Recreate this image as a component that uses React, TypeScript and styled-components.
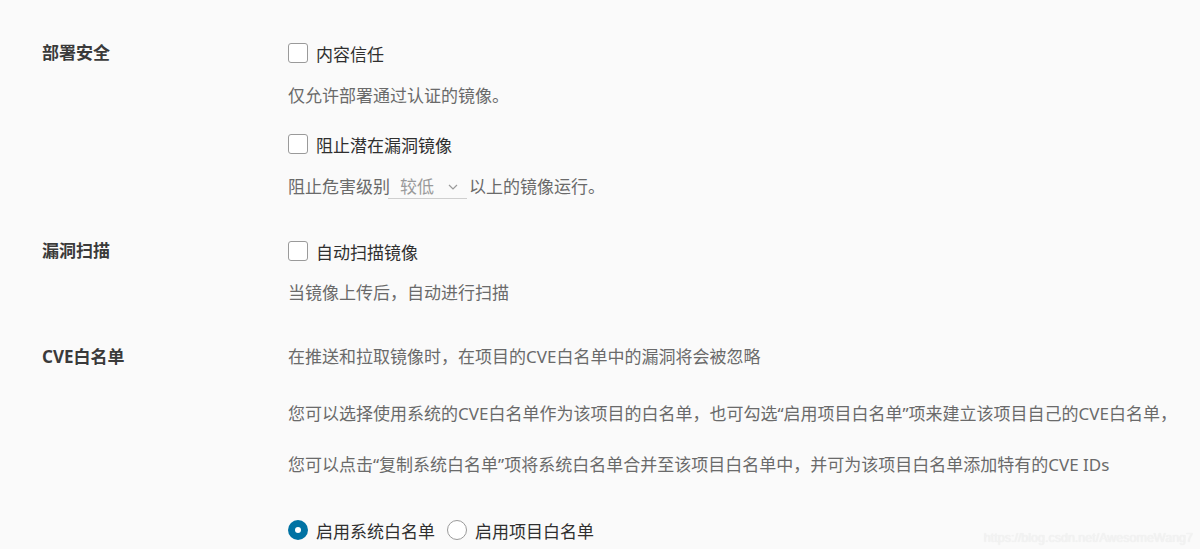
import React, { FC } from "react";
import styled, { createGlobalStyle } from "styled-components";

const GlobalStyle = createGlobalStyle`
  html, body {
    margin: 0;
    padding: 0;
    background: #fafafa;
  }
  body {
    font-family: "Noto Sans", "Noto Sans CJK SC", sans-serif;
    -webkit-font-smoothing: antialiased;
  }
`;

const Page = styled.div`
  position: relative;
  width: 1200px;
  height: 549px;
  overflow: hidden;
  background: #fafafa;
  padding: 41px 0 0 42px;
  box-sizing: border-box;
`;

const Section = styled.section<{ $gap?: number }>`
  display: grid;
  grid-template-columns: 246px 1fr;
  margin-top: ${({ $gap }) => $gap ?? 0}px;
`;

const SectionLabel = styled.div`
  font-size: 17px;
  line-height: 24px;
  font-weight: 700;
  color: #3a3a3a;
  white-space: nowrap;
`;

const Content = styled.div`
  display: flex;
  flex-direction: column;
`;

const CheckRow = styled.label<{ $top?: number }>`
  display: flex;
  align-items: center;
  gap: 8px;
  height: 24px;
  margin-top: ${({ $top }) => $top ?? 0}px;
  font-size: 17px;
  color: #2f2f2f;
  white-space: nowrap;
`;

const Box = styled.span`
  width: 18px;
  height: 18px;
  border: 1px solid #9a9a9a;
  border-radius: 3px;
  background: #fff;
  flex: none;
`;

const Description = styled.div<{ $top?: number }>`
  display: flex;
  align-items: center;
  height: 24px;
  margin-top: ${({ $top }) => $top ?? 0}px;
  font-size: 17px;
  line-height: 24px;
  color: #6a6a6a;
  white-space: nowrap;
`;

const SelectBox = styled.span`
  display: inline-flex;
  align-items: center;
  justify-content: space-between;
  box-sizing: border-box;
  width: 79px;
  height: 24px;
  margin: 0 2px 0 -2px;
  padding: 0 9px 0 12px;
  border-bottom: 1px solid #cfcfcf;
  color: #9a9a9a;
`;

const RadioGroup = styled.div<{ $top?: number }>`
  display: flex;
  align-items: center;
  gap: 12px;
  margin-top: ${({ $top }) => $top ?? 0}px;
`;

const RadioItem = styled.label`
  display: flex;
  align-items: center;
  gap: 8px;
  height: 24px;
  font-size: 17px;
  color: #2f2f2f;
  white-space: nowrap;
`;

const RadioDot = styled.span<{ $checked?: boolean }>`
  width: 20px;
  height: 20px;
  box-sizing: border-box;
  border-radius: 50%;
  flex: none;
  display: flex;
  align-items: center;
  justify-content: center;
  background: ${({ $checked }) => ($checked ? "#0072a3" : "#fff")};
  border: ${({ $checked }) => ($checked ? "none" : "1px solid #9a9a9a")};

  &::after {
    content: "";
    display: ${({ $checked }) => ($checked ? "block" : "none")};
    width: 6px;
    height: 6px;
    border-radius: 50%;
    background: #fff;
  }
`;

const Watermark = styled.div`
  position: absolute;
  right: 7px;
  bottom: 4px;
  font-family: "Liberation Sans", Arial, sans-serif;
  font-size: 12.5px;
  color: #f3f3f3;
  text-shadow: 0 0 1px #e6e6e6;
`;

const Chevron: FC = () => (
  <svg width="10" height="6" viewBox="0 0 10 6" fill="none">
    <path d="M1 1l4 4 4-4" stroke="#9a9a9a" strokeWidth="1.2" />
  </svg>
);

const Checkbox: FC<{ label: string; top?: number }> = ({ label, top }) => (
  <CheckRow $top={top}>
    <Box />
    {label}
  </CheckRow>
);

const App: FC = () => {
  return (
    <>
      <GlobalStyle />
      <Page>
        <Section>
          <SectionLabel>部署安全</SectionLabel>
          <Content>
            <Checkbox label="内容信任" />
            <Description $top={19}>仅允许部署通过认证的镜像。</Description>
            <Checkbox label="阻止潜在漏洞镜像" top={24} />
            <Description $top={19}>
              阻止危害级别
              <SelectBox>
                较低
                <Chevron />
              </SelectBox>
              以上的镜像运行。
            </Description>
          </Content>
        </Section>

        <Section $gap={40}>
          <SectionLabel>漏洞扫描</SectionLabel>
          <Content>
            <Checkbox label="自动扫描镜像" />
            <Description $top={18}>当镜像上传后，自动进行扫描</Description>
          </Content>
        </Section>

        <Section $gap={40}>
          <SectionLabel>CVE白名单</SectionLabel>
          <Content>
            <Description>在推送和拉取镜像时，在项目的CVE白名单中的漏洞将会被忽略</Description>
            <Description $top={33}>
              您可以选择使用系统的CVE白名单作为该项目的白名单，也可勾选“启用项目白名单”项来建立该项目自己的CVE白名单，
            </Description>
            <Description $top={27}>
              您可以点击“复制系统白名单”项将系统白名单合并至该项目白名单中，并可为该项目白名单添加特有的CVE IDs
            </Description>
            <RadioGroup $top={41}>
              <RadioItem>
                <RadioDot $checked />
                启用系统白名单
              </RadioItem>
              <RadioItem>
                <RadioDot />
                启用项目白名单
              </RadioItem>
            </RadioGroup>
          </Content>
        </Section>

        <Watermark>https://blog.csdn.net/AwesomeWang7</Watermark>
      </Page>
    </>
  );
};

export default App;
